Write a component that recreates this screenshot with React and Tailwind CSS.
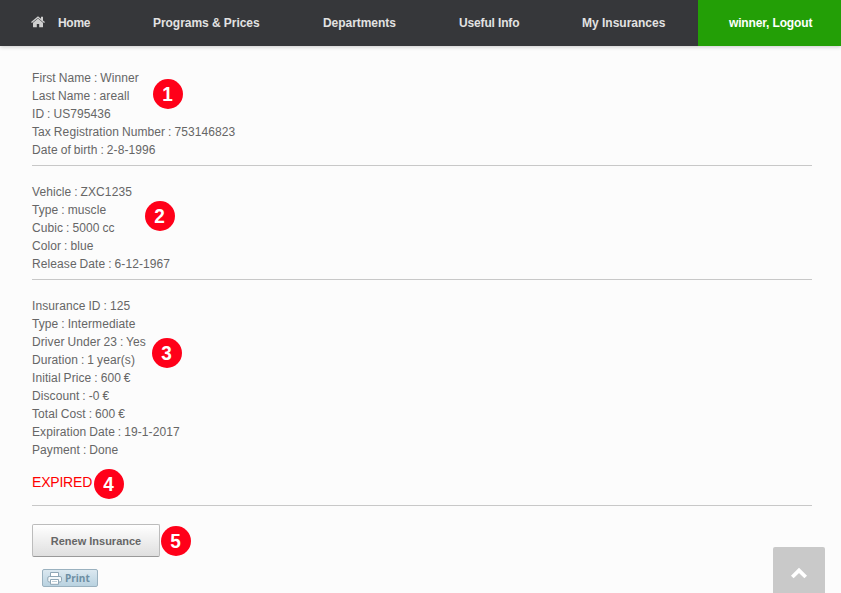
import React from 'react';

const personal = [
  'First Name : Winner',
  'Last Name : areall',
  'ID : US795436',
  'Tax Registration Number : 753146823',
  'Date of birth : 2-8-1996',
];

const vehicle = [
  'Vehicle : ZXC1235',
  'Type : muscle',
  'Cubic : 5000 cc',
  'Color : blue',
  'Release Date : 6-12-1967',
];

const insurance = [
  'Insurance ID : 125',
  'Type : Intermediate',
  'Driver Under 23 : Yes',
  'Duration : 1 year(s)',
  'Initial Price : 600 €',
  'Discount : -0 €',
  'Total Cost : 600 €',
  'Expiration Date : 19-1-2017',
  'Payment : Done',
];

function Badge({ n, className }) {
  return (
    <span
      className={`absolute flex h-[30px] w-[30px] items-center justify-center rounded-full bg-[#ff0019] pr-px pb-px text-xl leading-none font-bold text-white ${className}`}
    >
      <span className="scale-x-95">{n}</span>
    </span>
  );
}

function Lines({ items }) {
  return (
    <div className="text-xs leading-[18px] tracking-[0.09px] [word-spacing:-0.5px]">
      {items.map((line) => (
        <p key={line}>{line}</p>
      ))}
    </div>
  );
}

function Nav() {
  return (
    <nav className="flex h-[46px] items-center bg-[#36373a] text-xs font-bold tracking-[-0.05px] whitespace-nowrap text-[#e2e2e2] shadow-[0_1px_4px_rgba(0,0,0,0.2)]">
      <a className="ml-[31px] flex items-center">
        <svg className="-mt-[2px]" width="14" height="12" viewBox="0 0 14 12" fill="#cfcfcf">
          <path d="M7 2.600 2 6.800V10.800q0 .5.500.5H5.800V8H8.200V11.300H11.500q.5 0 .5-.5V6.800Z" />
          <path d="M7 .2 10 2.700V.8H12V4.400L14 6 13.100 7 7 2 .9 7 0 6Z" />
        </svg>
        <span className="ml-[13px] w-[95px] tracking-[-0.3px]">Home</span>
      </a>
      <a className="w-[170px]">Programs &amp; Prices</a>
      <a className="w-[136px]">Departments</a>
      <a className="w-[123px] tracking-[-0.15px]">Useful Info</a>
      <a className="w-[116px] tracking-normal">My Insurances</a>
      <a className="flex h-full flex-1 items-center bg-[#239f06] pl-[31px] tracking-[-0.15px] text-white">winner, Logout</a>
    </nav>
  );
}

export default function App() {
  return (
    <div className="relative flex h-[593px] w-[841px] flex-col overflow-hidden bg-[#fcfcfc] font-['Liberation_Sans',Arial,sans-serif] text-[#666]">
      <Nav />
      <main className="ml-8 w-[780px] pt-[23px]">
        <section className="border-b border-[#c8c8c8] pb-[6px]">
          <Lines items={personal} />
        </section>
        <section className="border-b border-[#c8c8c8] pt-[17px] pb-[6px]">
          <Lines items={vehicle} />
        </section>
        <section className="border-b border-[#c8c8c8] pt-[17px]">
          <Lines items={insurance} />
          <p className="mt-[14px] mb-[14px] text-sm leading-[18px] tracking-[-0.2px] text-[#f00]">EXPIRED</p>
        </section>
        <button className="mt-[18px] flex h-[33px] w-32 items-center justify-center rounded-[2px] border border-[#bcbcbc] border-b-[#999] bg-linear-to-b from-white to-[#dfdfdf] pt-[2px] text-[11px] font-bold text-[#666]">
          Renew Insurance
        </button>
        <button className="mt-3 ml-[10px] flex h-[18px] w-14 items-center rounded-[2px] border border-[#9ab1bf] bg-linear-to-b from-[#dbe8f0] to-[#b9d2e0] pl-1">
          <svg width="16" height="13" viewBox="0 0 16 13" fill="none" stroke="#8fa6b5">
            <path d="M3.500 4.500V.5H11.500V4.500" fill="#fff" />
            <rect x=".8" y="4.500" width="13.700" height="5.500" rx="1.500" fill="#f4f8fa" />
            <path d="M3.500 7.500H11.500V12.300H3.500Z" fill="#fff" />
            <path d="M5 9.500H10" stroke="#c0cfd8" />
          </svg>
          <span className="ml-[2px] font-['Open_Sans',sans-serif] text-[10px] leading-none font-bold text-[#6d8ea3]">Print</span>
        </button>
      </main>

      <Badge n={1} className="top-[79px] left-[153px]" />
      <Badge n={2} className="top-[201px] left-[145px]" />
      <Badge n={3} className="top-[338px] left-[152px]" />
      <Badge n={4} className="top-[469px] left-[94px]" />
      <Badge n={5} className="top-[526px] left-[161px]" />

      <a className="absolute top-[547px] left-[773px] flex h-[52px] w-[52px] items-center justify-center rounded-[2px] bg-[#c9c9c9]">
        <svg width="18" height="12" viewBox="0 0 18 12" fill="none" stroke="#fff" strokeWidth="3.800">
          <path d="M2.300 10 9 3.500 15.700 10" />
        </svg>
      </a>
    </div>
  );
}
